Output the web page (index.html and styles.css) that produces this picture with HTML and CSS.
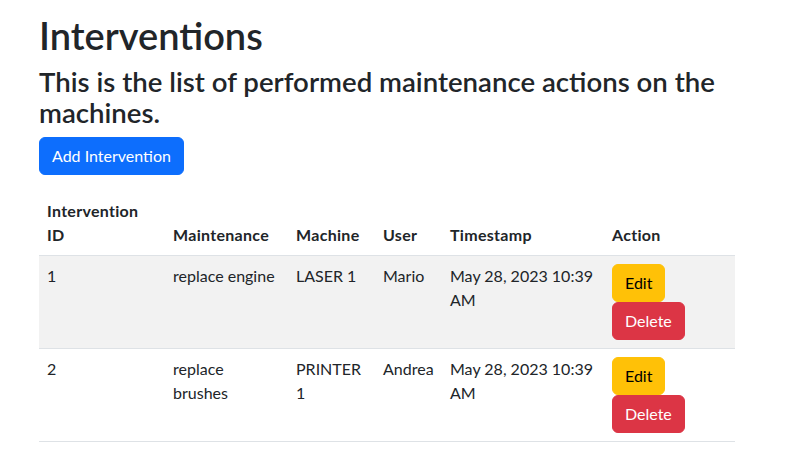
FILE: index.html
```html
<!DOCTYPE html>
<html lang="en">
<head>
<meta charset="utf-8">
<title>Interventions</title>
<link rel="stylesheet" href="styles.css">
</head>
<body>
<div class="page">
  <h1 class="title">Interventions</h1>
  <h2 class="subtitle">This is the list of performed maintenance actions on the machines.</h2>
  <div class="toolbar">
    <button class="btn btn-primary" type="button">Add Intervention</button>
  </div>
  <table class="table">
    <colgroup>
      <col class="c-id">
      <col class="c-maint">
      <col class="c-machine">
      <col class="c-user">
      <col class="c-time">
      <col class="c-action">
    </colgroup>
    <thead>
      <tr>
        <th>Intervention ID</th>
        <th>Maintenance</th>
        <th>Machine</th>
        <th>User</th>
        <th>Timestamp</th>
        <th>Action</th>
      </tr>
    </thead>
    <tbody>
      <tr class="odd">
        <td>1</td>
        <td>replace engine</td>
        <td>LASER 1</td>
        <td>Mario</td>
        <td>May 28, 2023 10:39 AM</td>
        <td><div class="actions"><button class="btn btn-warning" type="button">Edit</button><button class="btn btn-danger" type="button">Delete</button></div></td>
      </tr>
      <tr>
        <td>2</td>
        <td>replace brushes</td>
        <td>PRINTER 1</td>
        <td>Andrea</td>
        <td>May 28, 2023 10:39 AM</td>
        <td><div class="actions"><button class="btn btn-warning" type="button">Edit</button><button class="btn btn-danger" type="button">Delete</button></div></td>
      </tr>
    </tbody>
  </table>
</div>
</body>
</html>
```

FILE: styles.css
```css
* { box-sizing: border-box; }

body {
  margin: 0;
  font-family: Lato, "Liberation Sans", sans-serif;
  font-size: 16px;
  line-height: 1.5;
  color: #212529;
  background: #fff;
}

.page {
  width: 735px;
  padding: 12px 0 0 39px;
}

.title {
  margin: 0 0 8px;
  font-size: 38px;
  font-weight: 600;
  line-height: 46px;
}

.subtitle {
  margin: 0 0 9px;
  font-size: 27.6px;
  font-weight: 600;
  line-height: 31px;
}

.toolbar {
  margin-bottom: 16px;
}

.btn {
  display: inline-block;
  font-family: inherit;
  font-size: 16px;
  line-height: 24px;
  font-weight: 400;
  padding: 6px 12px;
  border: 1px solid transparent;
  border-radius: 6px;
  cursor: pointer;
}

.btn-primary { background: #0d6efd; border-color: #0d6efd; color: #fff; }
.btn-warning { background: #ffc107; border-color: #ffc107; color: #000; }
.btn-danger { background: #dc3545; border-color: #dc3545; color: #fff; }

.table {
  width: 696px;
  table-layout: fixed;
  border-collapse: collapse;
  vertical-align: top;
}

.c-id { width: 126px; }
.c-maint { width: 123px; }
.c-machine { width: 87px; }
.c-user { width: 67px; }
.c-time { width: 162px; }
.c-action { width: 131px; }

.table th,
.table td {
  padding: 8px;
  border-bottom: 1px solid #dee2e6;
  text-align: left;
  line-height: 24px;
}

.table thead th {
  vertical-align: bottom;
  font-weight: 700;
  letter-spacing: 0.3px;
}

.table tbody td { vertical-align: top; }

.table tr.odd td { background: #f2f2f2; }

.actions {
  display: flex;
  flex-direction: column;
  align-items: flex-start;
}
```
